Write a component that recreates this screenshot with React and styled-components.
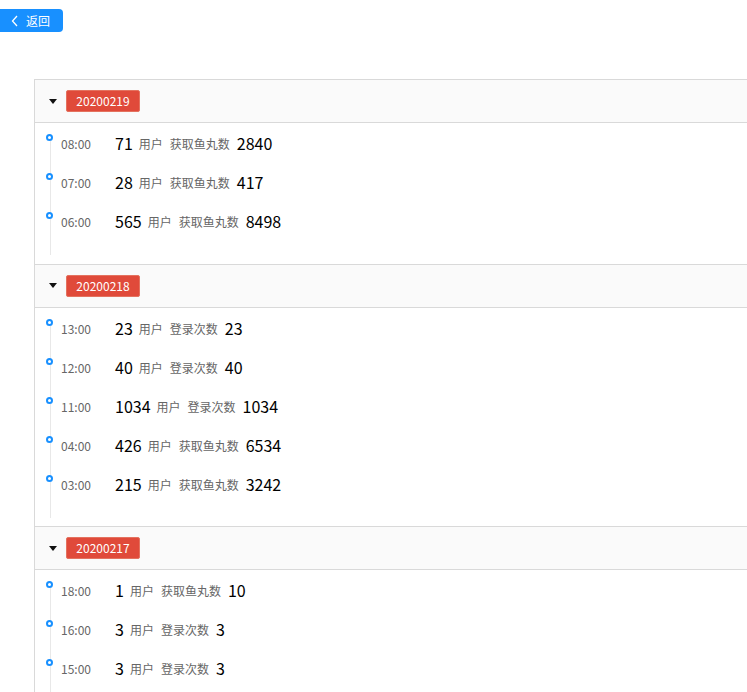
import styled, { createGlobalStyle } from 'styled-components';

const GlobalStyle = createGlobalStyle`
  html, body {
    margin: 0;
    padding: 0;
    background: #ffffff;
    overflow: hidden;
    font-family: 'Noto Sans CJK SC', 'Noto Sans', sans-serif;
  }
`;

const days = [
  {
    date: '20200219',
    rows: [
      { time: '08:00', users: 71, label: '获取鱼丸数', value: 2840 },
      { time: '07:00', users: 28, label: '获取鱼丸数', value: 417 },
      { time: '06:00', users: 565, label: '获取鱼丸数', value: 8498 },
    ],
  },
  {
    date: '20200218',
    rows: [
      { time: '13:00', users: 23, label: '登录次数', value: 23 },
      { time: '12:00', users: 40, label: '登录次数', value: 40 },
      { time: '11:00', users: 1034, label: '登录次数', value: 1034 },
      { time: '04:00', users: 426, label: '获取鱼丸数', value: 6534 },
      { time: '03:00', users: 215, label: '获取鱼丸数', value: 3242 },
    ],
  },
  {
    date: '20200217',
    rows: [
      { time: '18:00', users: 1, label: '获取鱼丸数', value: 10 },
      { time: '16:00', users: 3, label: '登录次数', value: 3 },
      { time: '15:00', users: 3, label: '登录次数', value: 3 },
    ],
  },
];

export default function App() {
  return (
    <Page>
      <GlobalStyle />
      <BackButton>
        <svg width="8" height="12" viewBox="0 0 8 12">
          <polyline points="6,1 1.5,6 6,11" fill="none" stroke="#fff" strokeWidth="1.3" />
        </svg>
        返回
      </BackButton>
      <Collapse>
        {days.map((day) => (
          <Panel key={day.date}>
            <Header>
              <Caret />
              <Tag>{day.date}</Tag>
            </Header>
            <Content>
              <Timeline>
                {day.rows.map((row) => (
                  <Item key={row.time}>
                    <Dot />
                    <Time>{row.time}</Time>
                    <Num>{row.users}</Num>
                    <Label>用户</Label>
                    <Label>{row.label}</Label>
                    <Num $last>{row.value}</Num>
                  </Item>
                ))}
              </Timeline>
            </Content>
          </Panel>
        ))}
      </Collapse>
    </Page>
  );
}

const Page = styled.div`
  padding-top: 9px;
  height: 692px;
  box-sizing: border-box;
  overflow: hidden;
`;

const BackButton = styled.button`
  display: flex;
  align-items: center;
  gap: 7px;
  height: 23px;
  width: 63px;
  padding: 0 0 0 11px;
  border: none;
  border-radius: 0 4px 4px 0;
  background: #1890ff;
  color: #ffffff;
  font-family: 'Noto Sans CJK SC', sans-serif;
  font-size: 12px;
  cursor: pointer;
`;

const Collapse = styled.div`
  margin: 47px 0 0 34px;
  width: 800px;
  border-left: 1px solid #d9d9d9;
  border-top: 1px solid #d9d9d9;
`;

const Panel = styled.div`
  border-bottom: 1px solid #d9d9d9;
`;

const Header = styled.div`
  display: flex;
  align-items: center;
  gap: 9px;
  height: 42px;
  padding-left: 14px;
  background: #fafafa;
  border-bottom: 1px solid #d9d9d9;
`;

const Caret = styled.span`
  width: 0;
  height: 0;
  border-left: 4px solid transparent;
  border-right: 4px solid transparent;
  border-top: 5px solid #111;
`;

const Tag = styled.span`
  height: 22px;
  box-sizing: border-box;
  line-height: 20px;
  width: 74px;
  text-align: center;
  background: #e04a3a;
  border: 1px solid #e4725f;
  border-radius: 2px;
  color: #ffffff;
  font-size: 12px;
`;

const Content = styled.div`
  padding: 11px 0 8.5px 15px;
`;

const Timeline = styled.div`
  border-left: 1px solid #e8e8e8;
  padding-bottom: 4px;
`;

const Item = styled.div`
  position: relative;
  display: flex;
  align-items: flex-start;
  height: 39px;
  padding-left: 10px;
  line-height: 19px;
`;

const Dot = styled.span`
  position: absolute;
  left: -5px;
  top: 0;
  width: 7px;
  height: 7px;
  box-sizing: border-box;
  border: 2px solid #1890ff;
  border-radius: 50%;
  background: #ffffff;
`;

const Time = styled.span`
  width: 54px;
  font-size: 12px;
  color: #666666;
`;

const Num = styled.span`
  font-size: 16px;
  color: #000000;
  margin-left: ${({ $last }) => ($last ? '6px' : '0')};
`;

const Label = styled.span`
  font-size: 12px;
  color: #666666;
  margin-left: 6px;
  margin-right: 1px;
`;
